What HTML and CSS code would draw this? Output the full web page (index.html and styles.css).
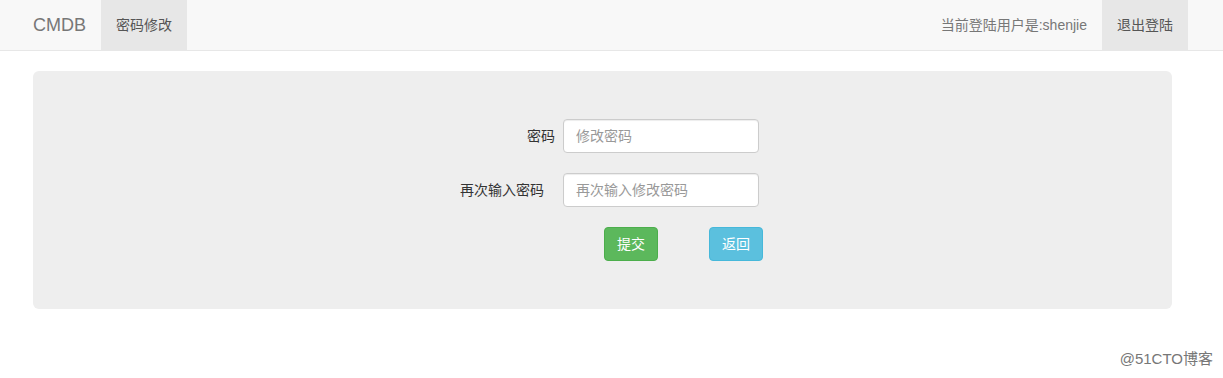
FILE: index.html
```html
<!DOCTYPE html>
<html lang="zh-CN">
<head>
    <meta charset="UTF-8">
    <meta name="viewport" content="width=device-width, initial-scale=1.0">
    <title>密码修改 - CMDB</title>
    <link rel="stylesheet" href="styles.css">
</head>
<body>
    <nav class="navbar">
        <a class="brand" href="#">CMDB</a>
        <a class="nav-item active" href="#">密码修改</a>
        <div class="spacer"></div>
        <span class="nav-text">当前登陆用户是:shenjie</span>
        <a class="nav-item active" href="#">退出登陆</a>
    </nav>

    <div class="jumbotron">
        <form class="form">
            <div class="row">
                <label class="label" for="pwd">密码</label>
                <input class="input" id="pwd" type="password" placeholder="修改密码">
            </div>
            <div class="row">
                <label class="label label-wide" for="pwd2">再次输入密码</label>
                <input class="input" id="pwd2" type="password" placeholder="再次输入修改密码">
            </div>
            <div class="row actions">
                <button class="btn btn-success" type="submit">提交</button>
                <a class="btn btn-info" href="#">返回</a>
            </div>
        </form>
    </div>

    <div class="watermark">@51CTO博客</div>
</body>
</html>
```

FILE: styles.css
```css
* {
    margin: 0;
    padding: 0;
    box-sizing: border-box;
}

body {
    font-family: "Liberation Sans", Arial, "Noto Sans CJK SC", sans-serif;
    font-size: 14px;
    color: #333;
    background: #fff;
    min-height: 378px;
    position: relative;
}

a {
    text-decoration: none;
}

.navbar {
    display: flex;
    align-items: stretch;
    height: 51px;
    padding: 0 35px 0 18px;
    background: #f8f8f8;
    border-bottom: 1px solid #e7e7e7;
}

.brand {
    padding: 0 15px;
    line-height: 50px;
    font-size: 18px;
    color: #777;
}

.nav-item {
    padding: 0 15px;
    line-height: 50px;
    color: #777;
}

.nav-item.active {
    background: #e7e7e7;
    color: #555;
}

.spacer {
    flex: 1;
}

.nav-text {
    line-height: 50px;
    margin-right: 15px;
    color: #777;
}

.jumbotron {
    margin: 20px 51px 0 33px;
    padding: 48px 0 48px 422px;
    background: #eee;
    border-radius: 6px;
}

.form {
    display: flex;
    flex-direction: column;
    gap: 20px;
}

.row {
    display: flex;
    align-items: center;
}

.label {
    width: 100px;
    margin-right: 8px;
    padding-bottom: 2px;
    text-align: right;
    color: #333;
}

.label-wide {
    width: 111px;
    padding-right: 11px;
    margin-left: -11px;
}

.input {
    width: 196px;
    height: 34px;
    padding: 6px 12px;
    font-family: inherit;
    font-size: 14px;
    color: #555;
    background: #fff;
    border: 1px solid #ccc;
    border-radius: 4px;
    box-shadow: inset 0 1px 1px rgba(0, 0, 0, 0.075);
}

.input::placeholder {
    color: #999;
}

.actions {
    padding-left: 149px;
    gap: 51px;
}

.btn {
    display: inline-block;
    width: 54px;
    height: 34px;
    line-height: 32px;
    text-align: center;
    font-family: inherit;
    font-size: 14px;
    color: #fff;
    border: 1px solid transparent;
    border-radius: 4px;
    cursor: pointer;
}

.btn-success {
    background: #5cb85c;
    border-color: #4cae4c;
}

.btn-info {
    background: #5bc0de;
    border-color: #46b8da;
}

.watermark {
    position: absolute;
    right: 10px;
    bottom: 10px;
    font-size: 15px;
    color: #777;
}
```
